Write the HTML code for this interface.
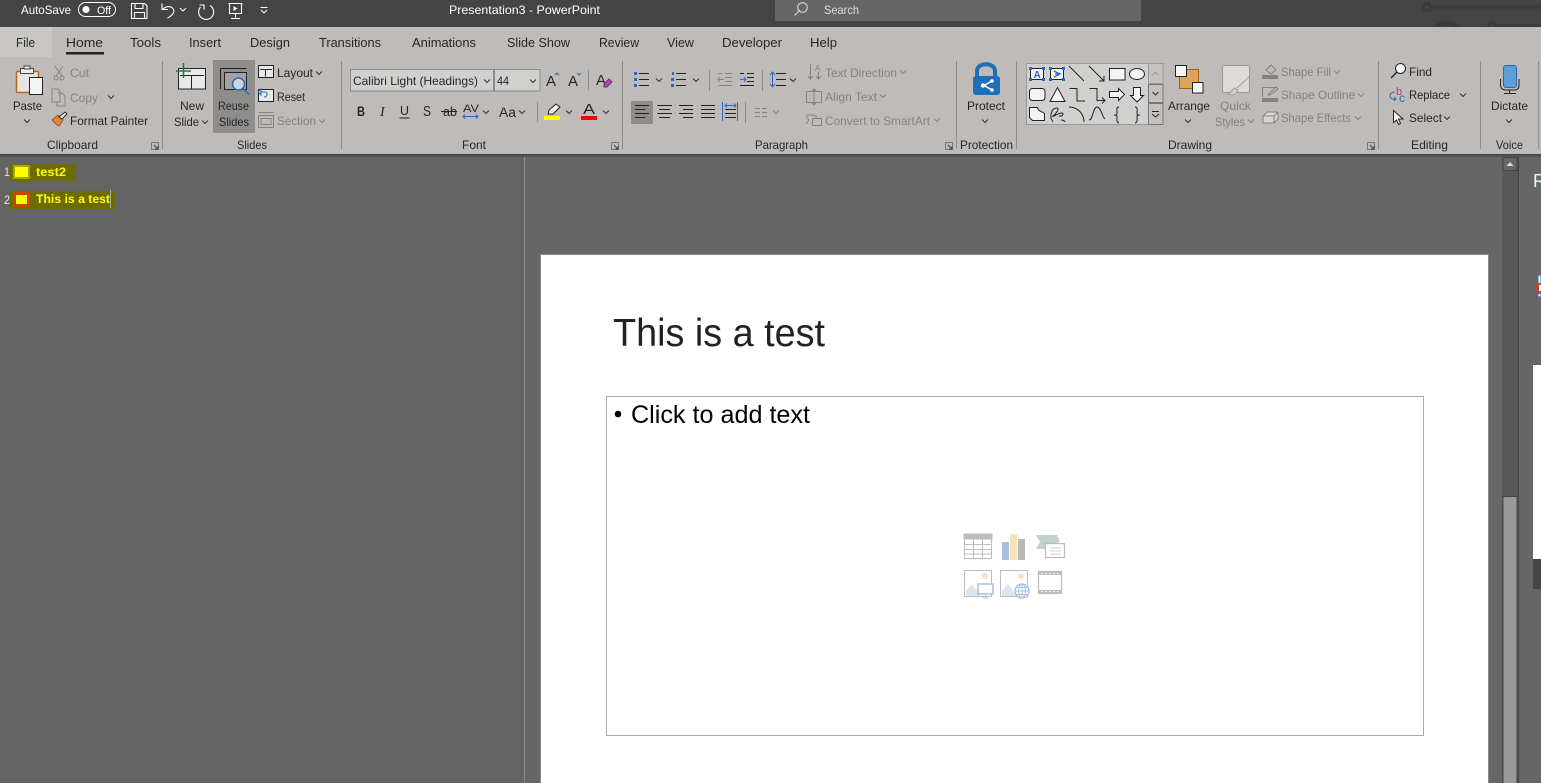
<!DOCTYPE html>
<html lang="en"><head><meta charset="utf-8"><title>Presentation3 - PowerPoint</title>
<style>
html,body{margin:0;padding:0;background:#666;overflow:hidden}
svg{display:block}
text{font-family:"Liberation Sans",sans-serif;font-size:12px;fill:#262626}
.tab text{font-size:13px}
.g text,text.g{fill:#858380}
.w{fill:#fff}
.ic{fill:none;stroke:#222;stroke-width:1}
.gi{fill:none;stroke:#858380;stroke-width:1}
.ch{fill:none;stroke:#333;stroke-width:1}
.sep{stroke:#8f8d8b;stroke-width:1}
</style></head><body>
<svg xmlns="http://www.w3.org/2000/svg" width="1541" height="783" viewBox="0 0 1541 783">
<defs>
<polyline id="c" points="-3,-1.5 0,1.5 3,-1.5" fill="none" stroke="#333" stroke-width="1"/>
<polyline id="cg" points="-3,-1.5 0,1.5 3,-1.5" fill="none" stroke="#858380" stroke-width="1"/>
<g id="dl" fill="none" stroke="#444"><rect x="0.5" y="0.5" width="7" height="7" stroke="#777"/><path d="M3 3l4 4M4 7h3V4"/></g>
<linearGradient id="sh" x1="0" y1="0" x2="0" y2="1"><stop offset="0" stop-color="#3e3e3e"/><stop offset="1" stop-color="#666"/></linearGradient>
</defs>
<rect width="1541" height="783" fill="#666"/>
<!-- title bar -->
<rect width="1541" height="27" fill="#444"/>
<g fill="none" stroke="#3a3a3a" stroke-width="3"><circle cx="1427" cy="7" r="3.5"/><path d="M1431 7h110M1496 26h45"/><circle cx="1447" cy="38" r="15" stroke-width="5"/><circle cx="1492" cy="26" r="3.5"/></g>
<rect x="775" width="366" height="21" fill="#666"/>
<text class="w" x="21" y="14" textLength="50" lengthAdjust="spacingAndGlyphs">AutoSave</text>
<rect x="78.500" y="2.500" width="37" height="14" rx="7" fill="none" stroke="#fff"/>
<circle cx="86" cy="9.500" r="3.500" fill="#fff"/>
<text class="w" x="97" y="14" style="font-size:11px" textLength="14" lengthAdjust="spacingAndGlyphs">Off</text>
<g fill="none" stroke="#fff" stroke-width="1.100">
<path d="M131.500 3.500h13l2.500 2.500v12.500h-15.500z M135 3.500v5h8v-5 M134.500 18.500v-6h10v6"/>
<path d="M162 3.500v6h6M162.500 9.500c3-3 7-4 10-1.500 3 3 1 7-5 10"/>
<path d="M210 5.500a7.500 7.500 0 1 1-9.500 1.500M199.500 5h4.500v4.500"/>
<path d="M228.500 3.500h14M229.500 3.500v10h12v-10M235.500 13.500v4M231 18.500h9"/>
</g>
<path d="M233.500 6v5l4-2.500z" fill="#fff"/>
<polyline points="180,8 183,11 186,8" fill="none" stroke="#fff"/>
<path d="M260.500 7.500h7M261 10l3 3 3-3" fill="none" stroke="#fff"/>
<text class="w" x="449" y="14" textLength="151" lengthAdjust="spacingAndGlyphs">Presentation3  -  PowerPoint</text>
<path d="M794.500 15.500l5.500-5.500" stroke="#ddd" fill="none"/><circle cx="802.500" cy="7.500" r="4.800" fill="none" stroke="#ddd"/>
<text x="824" y="14" style="fill:#ddd" textLength="35" lengthAdjust="spacingAndGlyphs">Search</text>

<!-- ribbon -->
<rect y="27" width="1541" height="127" fill="#bfbbb8"/>
<rect y="27" width="52" height="30" fill="#c9c7c4"/>
<rect y="154" width="1541" height="4" fill="url(#sh)"/>
<g class="tab">
<text x="16" y="47" textLength="19" lengthAdjust="spacingAndGlyphs">File</text>
<text x="66" y="47" textLength="37" lengthAdjust="spacingAndGlyphs">Home</text>
<text x="130" y="47" textLength="31" lengthAdjust="spacingAndGlyphs">Tools</text>
<text x="189" y="47" textLength="32" lengthAdjust="spacingAndGlyphs">Insert</text>
<text x="250" y="47" textLength="40" lengthAdjust="spacingAndGlyphs">Design</text>
<text x="319" y="47" textLength="62" lengthAdjust="spacingAndGlyphs">Transitions</text>
<text x="412" y="47" textLength="64" lengthAdjust="spacingAndGlyphs">Animations</text>
<text x="507" y="47" textLength="63" lengthAdjust="spacingAndGlyphs">Slide Show</text>
<text x="599" y="47" textLength="40" lengthAdjust="spacingAndGlyphs">Review</text>
<text x="667" y="47" textLength="27" lengthAdjust="spacingAndGlyphs">View</text>
<text x="722" y="47" textLength="60" lengthAdjust="spacingAndGlyphs">Developer</text>
<text x="810" y="47" textLength="27" lengthAdjust="spacingAndGlyphs">Help</text>
</g>
<rect x="66" y="52" width="38" height="2.500" fill="#262220"/>
<!-- separators -->
<g class="sep">
<line x1="162.500" y1="61" x2="162.500" y2="149"/><line x1="341.500" y1="61" x2="341.500" y2="149"/><line x1="622.500" y1="61" x2="622.500" y2="149"/><line x1="956.500" y1="61" x2="956.500" y2="149"/><line x1="1016.500" y1="61" x2="1016.500" y2="149"/><line x1="1378.500" y1="61" x2="1378.500" y2="149"/><line x1="1480.500" y1="61" x2="1480.500" y2="149"/><line x1="1538.500" y1="61" x2="1538.500" y2="149"/>
<line x1="588.500" y1="70" x2="588.500" y2="90"/><line x1="537.500" y1="102" x2="537.500" y2="122"/><line x1="709.500" y1="70" x2="709.500" y2="91"/><line x1="762.500" y1="70" x2="762.500" y2="91"/><line x1="745.500" y1="102" x2="745.500" y2="123"/>
</g>
<!-- group labels -->
<text x="47" y="149" textLength="51" lengthAdjust="spacingAndGlyphs">Clipboard</text>
<text x="237" y="149" textLength="30" lengthAdjust="spacingAndGlyphs">Slides</text>
<text x="462" y="149" textLength="24" lengthAdjust="spacingAndGlyphs">Font</text>
<text x="755" y="149" textLength="53" lengthAdjust="spacingAndGlyphs">Paragraph</text>
<text x="960" y="149" textLength="53" lengthAdjust="spacingAndGlyphs">Protection</text>
<text x="1168" y="149" textLength="44" lengthAdjust="spacingAndGlyphs">Drawing</text>
<text x="1411" y="149" textLength="37" lengthAdjust="spacingAndGlyphs">Editing</text>
<text x="1496" y="149" textLength="27" lengthAdjust="spacingAndGlyphs">Voice</text>
<use href="#dl" x="151" y="142"/><use href="#dl" x="611" y="142"/><use href="#dl" x="945" y="142"/><use href="#dl" x="1367" y="142"/>

<!-- clipboard -->
<rect x="16.500" y="71.500" width="22" height="21" rx="1" fill="#e7e3de" stroke="#b5651d" stroke-width="1.500"/>
<rect x="20.500" y="68.500" width="13" height="5" fill="#eee" stroke="#444"/><rect x="24" y="66" width="6" height="3" fill="#eee" stroke="#444"/>
<rect x="29.500" y="77.500" width="13" height="17" fill="#f2f5f5" stroke="#222"/>
<text x="13" y="110" textLength="29" lengthAdjust="spacingAndGlyphs">Paste</text>
<use href="#c" x="27" y="121"/>
<path d="M55 66l7 10M63 66l-7 10" class="gi"/><circle cx="56" cy="78" r="2" class="gi"/><circle cx="62" cy="78" r="2" class="gi"/>
<text class="g" x="70" y="77" textLength="19" lengthAdjust="spacingAndGlyphs">Cut</text>
<path d="M52 89h6l2 2v11h-8zM58 93h4l3 3v10h-8v-4" class="gi"/>
<text class="g" x="70" y="102" textLength="28" lengthAdjust="spacingAndGlyphs">Copy</text>
<use href="#c" x="111" y="97"/>
<path d="M52 120l6-5 5 5-4 6-3-2z" fill="#d9893a" stroke="#9a5a20"/>
<path d="M59 117l6-5 2 2-5 5z" fill="#f5f5f5" stroke="#222"/>
<text x="70" y="125" textLength="78" lengthAdjust="spacingAndGlyphs">Format Painter</text>
<!-- slides -->
<rect x="178.500" y="68.500" width="27" height="20.500" fill="#e9e9e9" stroke="#222"/><path d="M180 75.500h24M191.500 75.500v13" class="ic"/>
<path d="M176 71h15M183.500 63v15" stroke="#1e7b45" stroke-width="1.500"/>
<text x="180" y="110" textLength="24" lengthAdjust="spacingAndGlyphs">New</text>
<text x="174" y="126" textLength="25" lengthAdjust="spacingAndGlyphs">Slide</text>
<use href="#c" x="205" y="122"/>
<rect x="213" y="60" width="42" height="73" fill="#8f8d8b"/>
<path d="M220.500 89v-20.500h26" class="ic"/>
<rect x="224.500" y="72.500" width="22" height="17" fill="#a5a3a1" stroke="#222"/>
<circle cx="238.500" cy="84" r="6" fill="#c8d5e0" stroke="#2d68b0" stroke-width="1.500"/><path d="M243 88.500l6 6" stroke="#2d68b0" stroke-width="1.500"/>
<text x="218" y="110" textLength="31" lengthAdjust="spacingAndGlyphs">Reuse</text>
<text x="219" y="126" textLength="30" lengthAdjust="spacingAndGlyphs">Slides</text>
<rect x="258.500" y="65.500" width="15" height="12" fill="#e8e8e8" stroke="#222"/><path d="M260 69.500h12M265.500 69.500v7" class="ic"/>
<text x="277" y="77" textLength="36" lengthAdjust="spacingAndGlyphs">Layout</text><use href="#c" x="319" y="73"/>
<rect x="258.500" y="89.500" width="15" height="12" fill="#e8e8e8" stroke="#222"/><path d="M258 92l3-3v6l-3-3zM260 92h5c3 0 3 5-1 5" fill="none" stroke="#2d68b0"/>
<text x="277" y="101" textLength="28" lengthAdjust="spacingAndGlyphs">Reset</text>
<path d="M258.500 112.500h15M258.500 115.500h15v12h-15zM261 118.500h10v6h-10z" class="gi"/>
<text class="g" x="277" y="125" textLength="39" lengthAdjust="spacingAndGlyphs">Section</text><use href="#cg" x="322" y="121"/>
<!-- font -->
<rect x="350.500" y="69.500" width="143" height="21.500" fill="#d0d0cf" stroke="#8a8a8a"/>
<rect x="494.500" y="69.500" width="45.500" height="21.500" fill="#d0d0cf" stroke="#8a8a8a"/>
<text x="353" y="85" textLength="125" lengthAdjust="spacingAndGlyphs">Calibri Light (Headings)</text>
<use href="#c" x="487" y="81"/>
<text x="497" y="85" textLength="12" lengthAdjust="spacingAndGlyphs">44</text>
<use href="#c" x="533" y="81"/>
<text x="546" y="86" style="font-size:15px">A</text><path d="M555 75l2-2 2 2" fill="none" stroke="#2d68b0"/>
<text x="568" y="86" style="font-size:15px">A</text><path d="M577 73l2 2 2-2" fill="none" stroke="#2d68b0"/>
<text x="596" y="85" style="font-size:15px">A</text><path d="M604 84l5-5 3 3-5 5h-3z" fill="#a64ca6" stroke="#6f2f6f"/>
<text x="357" y="116" style="font-size:14px;font-weight:bold" textLength="8" lengthAdjust="spacingAndGlyphs">B</text>
<text x="380" y="116" style="font-size:14px;font-style:italic;font-family:'Liberation Serif',serif">I</text>
<text x="400" y="115" style="font-size:13px" textLength="9" lengthAdjust="spacingAndGlyphs">U</text><path d="M399.500 118h10" stroke="#222"/>
<text x="423" y="116" style="font-size:15px" textLength="8" lengthAdjust="spacingAndGlyphs">S</text>
<text x="443" y="116" style="font-size:13px" textLength="14" lengthAdjust="spacingAndGlyphs">ab</text><path d="M441 111.500h16" stroke="#222"/>
<text x="463" y="112" style="font-size:11px" textLength="16" lengthAdjust="spacingAndGlyphs">AV</text>
<path d="M463 116.500h15M465 114.500l-2 2 2 2M476 114.500l2 2-2 2" fill="none" stroke="#2d68b0"/><use href="#c" x="486" y="112"/>
<text x="499" y="117" style="font-size:14px" textLength="17" lengthAdjust="spacingAndGlyphs">Aa</text><use href="#c" x="522" y="112"/>
<path d="M548 114l1-4 7-6 4 3-7 7z" fill="#eee" stroke="#222"/><rect x="544" y="116" width="16" height="4" fill="#ff0"/><use href="#c" x="569" y="112"/>
<text x="583" y="114" style="font-size:15px" textLength="12" lengthAdjust="spacingAndGlyphs">A</text><rect x="581" y="116" width="16" height="4" fill="#f00"/><use href="#c" x="606" y="112"/>
<!-- paragraph -->
<g fill="#2d68c0"><rect x="634" y="72" width="3" height="3"/><rect x="634" y="78" width="3" height="3"/><rect x="634" y="84" width="3" height="3"/></g>
<path d="M639 73.500h10M639 79.500h10M639 85.500h10M676 73.500h10M676 79.500h10M676 85.500h10" class="ic"/>
<g fill="#2d68c0"><rect x="672" y="72" width="2" height="3"/><rect x="671" y="78" width="3" height="3"/><rect x="671" y="84" width="3" height="3"/></g>
<use href="#c" x="659" y="80"/><use href="#c" x="696" y="80"/>
<path d="M725 73.500h7M725 77.500h7M725 81.500h7M718 85.500h14M718 73.500h4M724 79.500h-6M720 77l-2 2.500 2 2.500" class="gi"/>
<path d="M747 73.500h7M747 77.500h7M747 81.500h7M740 85.500h14M740 73.500h4" class="ic"/>
<path d="M740 79.500h6M744 77l2 2.500-2 2.500" fill="none" stroke="#2d68c0"/>
<path d="M776 73.500h10M776 79.500h10M776 85.500h10" class="ic"/><path d="M772.500 73v13M770 75l2.500-3 2.500 3M770 84l2.500 3 2.500-3" fill="none" stroke="#2d68c0"/>
<use href="#c" x="793" y="80"/>
<rect x="631" y="101" width="22" height="23" fill="#8f8d8b"/>
<path d="M635 105.500h14M635 109.500h10M635 113.500h14M635 117.500h10" class="ic"/>
<path d="M657 105.500h15M659 109.500h11M657 113.500h15M659 117.500h11" class="ic"/>
<path d="M679 105.500h14M683 109.500h10M679 113.500h14M683 117.500h10" class="ic"/>
<path d="M701 105.500h14M701 109.500h14M701 113.500h14M701 117.500h14" class="ic"/>
<path d="M725 109.500h11M725 113.500h11M725 117.500h11" class="ic"/>
<path d="M722.500 102v19M737.500 102v19M725 105.500h11M727 103.500l-2 2 2 2M734 103.500l2 2-2 2" fill="none" stroke="#2d68c0"/>
<path d="M755 108.500h5M755 112.500h5M755 116.500h5M762 108.500h5M762 112.500h5M762 116.500h5" class="gi"/><use href="#cg" x="776" y="112"/>
<path d="M810.500 64v15M808 76l2.500 3 2.500-3M818.500 72v7M816 76l2.500 3 2.500-3" class="gi"/><text class="g" x="815" y="71" style="font-size:8px">A</text>
<text class="g" x="825" y="77" textLength="72" lengthAdjust="spacingAndGlyphs">Text Direction</text><use href="#cg" x="903" y="72"/>
<rect x="806.500" y="91.500" width="15" height="11" class="gi"/><path d="M814 89v16M812 91l2-2 2 2M812 103l2 2 2-2" class="gi"/>
<text class="g" x="825" y="101" textLength="52" lengthAdjust="spacingAndGlyphs">Align Text</text><use href="#cg" x="883" y="96"/>
<path d="M806 115h8l3 2M806 124l3-4-3-4" class="gi"/><rect x="812.500" y="118.500" width="9" height="7" class="gi"/>
<text class="g" x="825" y="125" textLength="105" lengthAdjust="spacingAndGlyphs">Convert to SmartArt</text><use href="#cg" x="937" y="120"/>
<!-- protect -->
<path d="M977 78v-7c0-9 18-9 18 0v7" fill="none" stroke="#1f6fb8" stroke-width="4"/>
<rect x="973" y="76" width="27" height="19" rx="3" fill="#1f6fb8"/>
<path d="M992 81l-8 4.500 8 4.500" fill="none" stroke="#fff" stroke-width="1.500"/><circle cx="983" cy="85.500" r="2.200" fill="#fff"/><circle cx="992" cy="81" r="1.800" fill="#fff"/><circle cx="992" cy="90" r="1.800" fill="#fff"/>
<text x="967" y="110" textLength="38" lengthAdjust="spacingAndGlyphs">Protect</text><use href="#c" x="985" y="121"/>
<!-- gallery -->
<rect x="1026.500" y="63.500" width="136" height="61" fill="#d0d0cf" stroke="#999"/>
<rect x="1148.500" y="63.500" width="14.500" height="20" fill="#c4c2c0" stroke="#999"/>
<rect x="1148.500" y="84.500" width="14.500" height="18" fill="#c4c2c0" stroke="#777"/>
<rect x="1148.500" y="103.500" width="14.500" height="21" fill="#c4c2c0" stroke="#777"/>
<polyline points="1152.500,75 1155.500,72 1158.500,75" fill="none" stroke="#999"/><use href="#c" x="1155.500" y="93.500"/>
<path d="M1152 111.500h7M1152 114l3.500 3 3.500-3" class="ic"/>
<rect x="1030.500" y="68.500" width="13" height="11" fill="#f4f4f4" stroke="#222"/><rect x="1050.500" y="68.500" width="13" height="11" fill="#f4f4f4" stroke="#222"/>
<g fill="#2d68c0"><rect x="1029" y="67" width="3" height="3"/><rect x="1042" y="67" width="3" height="3"/><rect x="1029" y="78" width="3" height="3"/><rect x="1042" y="78" width="3" height="3"/><rect x="1049" y="67" width="3" height="3"/><rect x="1062" y="67" width="3" height="3"/><rect x="1049" y="78" width="3" height="3"/><rect x="1062" y="78" width="3" height="3"/></g>
<text x="1033.500" y="78" style="font-size:10px;fill:#2d68c0;font-weight:bold">A</text>
<path d="M1054 71l6 3-6 3M1055 74h4" fill="none" stroke="#2d68c0" stroke-width="1.300"/>
<g fill="none" stroke="#222" stroke-width="1">
<path d="M1069 66l15 15M1089 66l15 15M1104 76v5h-5"/>
<rect x="1109.500" y="68.500" width="15.500" height="11.500" fill="#f4f4f4"/><ellipse cx="1137" cy="74" rx="7.500" ry="5.500" fill="#f4f4f4"/>
<rect x="1029.500" y="88.500" width="15.500" height="12" rx="3" fill="#f4f4f4"/><path d="M1050 101.500l7.500-14 7.500 14z" fill="#f4f4f4"/>
<path d="M1069.500 88.500h7.500v12.500h8M1089.500 88.500h7.500v12h8M1102 97.500l3 3-3 3"/>
<path d="M1109.500 91.500h9v-3l6 6-6 6v-3h-9z" fill="#f4f4f4"/><path d="M1133.500 87.500h7v8h3l-6.500 6.500-6.500-6.500h3z" fill="#f4f4f4"/>
<path d="M1029.500 107.500h8c1 4 3 3 7 6v7h-12l-3-3z" fill="#f4f4f4"/>
<path d="M1053 122c-4-5-2-14 4-14 3 0-1 6-4 8-2 2 5-3 9-3 2 0 1 4-3 3M1061 120c2 0 4 1 4 2"/>
<path d="M1069 107c8 0 15 6 15 15M1089 120c4 0 4-13 8-13s5 10 8 12"/>
<path d="M1119 107c-3 0-2 3-2 6s-1 2-3 2c2 0 3 0 3 2s-1 5 2 6M1135 107c3 0 2 3 2 6s1 2 3 2c-2 0-3 0-3 2s1 5-2 6"/>
</g>
<!-- arrange -->
<rect x="1179.500" y="69.500" width="19" height="19" fill="#dda25b" stroke="#a85d14"/>
<rect x="1175.500" y="65.500" width="11" height="11" fill="#f2f6f5" stroke="#222"/>
<rect x="1192.500" y="82.500" width="10.500" height="10.500" fill="#f2f6f5" stroke="#222"/>
<text x="1168" y="110" textLength="42" lengthAdjust="spacingAndGlyphs">Arrange</text><use href="#c" x="1188" y="121"/>
<rect x="1222.500" y="65.500" width="27" height="27" rx="2" fill="#dedcda" stroke="#9a9896"/>
<path d="M1250 76l-13 12M1231 95c3 0 6-1 7-5l-3-2c-3 1-4 5-8 6z" fill="#cfcdcb" stroke="#a09e9c"/>
<text class="g" x="1220" y="110" textLength="31" lengthAdjust="spacingAndGlyphs">Quick</text>
<text class="g" x="1215" y="126" textLength="30" lengthAdjust="spacingAndGlyphs">Styles</text><use href="#cg" x="1251" y="121"/>
<path d="M1266 70l5-5 5 5-5 4z" class="gi"/><rect x="1262" y="75" width="16" height="4" fill="#858380"/>
<text class="g" x="1281" y="76" textLength="50" lengthAdjust="spacingAndGlyphs">Shape Fill</text><use href="#cg" x="1337" y="72"/>
<path d="M1262.500 87.500h14M1262.500 87v10M1268 95l8-8 2 2-8 6z" class="gi"/><rect x="1262" y="98" width="16" height="4" fill="#858380"/>
<text class="g" x="1281" y="99" textLength="74" lengthAdjust="spacingAndGlyphs">Shape Outline</text><use href="#cg" x="1361" y="95"/>
<path d="M1263 116l4-4h11v7l-4 4h-11zM1263 116h11v7M1274 116l4-4" fill="#d8d6d4" stroke="#858380"/>
<text class="g" x="1281" y="122" textLength="70" lengthAdjust="spacingAndGlyphs">Shape Effects</text><use href="#cg" x="1358" y="118"/>
<!-- editing -->
<circle cx="1400.500" cy="68.500" r="5" fill="#f6f6f6" stroke="#222"/><path d="M1397 72l-6 6" stroke="#222" stroke-width="1.300"/>
<text x="1409" y="76" textLength="23" lengthAdjust="spacingAndGlyphs">Find</text>
<text x="1396" y="95" style="font-size:11px;fill:#a23ca2">b</text><text x="1399" y="102" style="font-size:12px;fill:#2d68c0">c</text>
<path d="M1395 92c-5 0-6 4-4 6 1 1 3 2 5 1M1394 97l2 2-2 2" fill="none" stroke="#2d68c0"/>
<text x="1409" y="99" textLength="41" lengthAdjust="spacingAndGlyphs">Replace</text><use href="#c" x="1463" y="95"/>
<path d="M1393.500 110.500v12l3-2.500 2 4.500 2-1-2-4.500h4.500z" fill="#f5f5f5" stroke="#222"/>
<text x="1409" y="122" textLength="33" lengthAdjust="spacingAndGlyphs">Select</text><use href="#c" x="1447" y="118"/>
<!-- dictate -->
<rect x="1503.500" y="65.500" width="13" height="22" rx="2.500" fill="#5b9fd8" stroke="#2d68b0"/>
<path d="M1500.500 79v6c0 3 2 5 5 5h9c3 0 4.500-2 4.500-5v-6M1509.500 90v3M1504 93.500h12" fill="none" stroke="#222"/>
<text x="1491" y="110" textLength="37" lengthAdjust="spacingAndGlyphs">Dictate</text><use href="#c" x="1509" y="121"/>

<!-- left panel -->
<rect y="158" width="524" height="625" fill="#646464"/>
<rect x="524" y="157" width="1" height="626" fill="#8d8d8d"/>
<rect x="10" y="164" width="66" height="17" fill="#6c6c00"/>
<rect x="13" y="165" width="17" height="14" fill="#a8a800"/>
<rect x="15" y="167" width="13" height="10" fill="#ff0"/>
<rect x="10" y="191" width="105" height="18" fill="#6c6c00"/>
<rect x="13" y="192" width="17" height="15" fill="#c8460e"/>
<rect x="16" y="195" width="11" height="9" fill="#ff0"/>
<text x="4" y="176" style="fill:#e4e4e4" textLength="6" lengthAdjust="spacingAndGlyphs">1</text>
<text x="4" y="204" style="fill:#e4e4e4" textLength="6" lengthAdjust="spacingAndGlyphs">2</text>
<text x="36" y="176" style="fill:#ff0;font-weight:bold" textLength="30" lengthAdjust="spacingAndGlyphs">test2</text>
<text x="36" y="203" style="fill:#ff0;font-weight:bold" textLength="74" lengthAdjust="spacingAndGlyphs">This is a test</text>
<rect x="110" y="190" width="1" height="18" fill="#aaa"/>

<!-- slide -->
<rect x="541" y="255" width="947" height="528" fill="#fff"/>
<path d="M540.500 783V254.500H1488.500V783" fill="none" stroke="#8a8a8a"/>
<text x="613" y="346" style="font-size:39px;fill:#222" textLength="212" lengthAdjust="spacingAndGlyphs">This is a test</text>
<rect x="606.500" y="396.500" width="817" height="339" fill="none" stroke="#555" stroke-dasharray="1 1"/>
<circle cx="618" cy="414" r="3.300" fill="#000"/>
<text x="631" y="423" style="font-size:25px;fill:#000" textLength="179" lengthAdjust="spacingAndGlyphs">Click to add text</text>
<!-- placeholder icons -->
<g fill="none" stroke="#bdbdbd" stroke-width="1">
<rect x="964.500" y="534.500" width="27" height="24" fill="#fff"/><rect x="964" y="534" width="28" height="5" fill="#bdbdbd"/>
<path d="M973.500 539v19M982.500 539v19M965 544.500h26M965 549.500h26M965 554h26"/>
<rect x="964.500" y="570.500" width="27" height="26"/><rect x="1000.500" y="570.500" width="27" height="26"/>
<rect x="1038.500" y="571.500" width="23" height="22" stroke-width="1.300"/>
</g>
<path d="M1039 572h23v3h-23zM1039 590h23v3h-23z" fill="#bdbdbd"/>
<path d="M1041 573h1.500v1h-1.500zM1045 573h1.500v1h-1.500zM1049 573h1.500v1h-1.500zM1053 573h1.500v1h-1.500zM1057 573h1.500v1h-1.500zM1041 591h1.500v1h-1.500zM1045 591h1.500v1h-1.500zM1049 591h1.500v1h-1.500zM1053 591h1.500v1h-1.500zM1057 591h1.500v1h-1.500z" fill="#fff"/>
<rect x="1002" y="542" width="7" height="18" fill="#a8c0dc"/><rect x="1010" y="534" width="7" height="26" fill="#f6e2bd"/><rect x="1018" y="539" width="7" height="21" fill="#bababa"/>
<path d="M1036 535h21l3 6-3 2h-11v6h-10l4-7z" fill="#bdd2cb"/><rect x="1045.500" y="543.500" width="19" height="14" fill="#fff" stroke="#bdbdbd" stroke-width="1.300"/>
<path d="M1050 548h11M1050 551h11M1050 554h11" stroke="#ccc"/>
<circle cx="985" cy="576" r="3" fill="#f6e2bd"/><circle cx="1021" cy="576" r="3" fill="#f6e2bd"/>
<path d="M966 596v-5l6-7 5 7 3 5zM1002 596v-5l6-7 5 7 3 5z" fill="#dbe5ef"/>
<rect x="978" y="584" width="15" height="10" fill="#fff" stroke="#a8c0dc" stroke-width="1.500"/><path d="M985.500 594v3M983 598h5" stroke="#a8c0dc"/>
<circle cx="1022" cy="591" r="7" fill="#fff" stroke="#a8c0dc" stroke-width="1.300"/><path d="M1015 591h14M1022 584v14M1016 587.500h12M1016 594.500h12" stroke="#a8c0dc" fill="none"/><ellipse cx="1022" cy="591" rx="3.500" ry="7" fill="none" stroke="#a8c0dc"/>

<!-- scrollbar -->
<rect x="1502" y="157" width="16" height="626" fill="#585858"/>
<rect x="1503" y="157.500" width="14" height="13" fill="#666" stroke="#444"/>
<path d="M1506.500 166l3.500-4 3.500 4z" fill="#ddd"/>
<rect x="1503" y="496.500" width="14" height="290" fill="#999" stroke="#444"/>
<rect x="1518" y="157" width="1" height="626" fill="#444"/>
<!-- right panel -->
<text x="1533" y="187" style="font-size:18px;fill:#dff">R</text>
<rect x="1538" y="275" width="3" height="22" fill="#fff" stroke="#2d68b0"/>
<rect x="1535" y="283" width="6" height="11" fill="#b7472a"/>
<rect x="1539" y="285" width="2" height="6" fill="#fff"/>
<rect x="1533" y="365" width="8" height="194" fill="#fff"/>
<rect x="1533" y="559" width="8" height="30" fill="#444"/>
</svg>
</body></html>
